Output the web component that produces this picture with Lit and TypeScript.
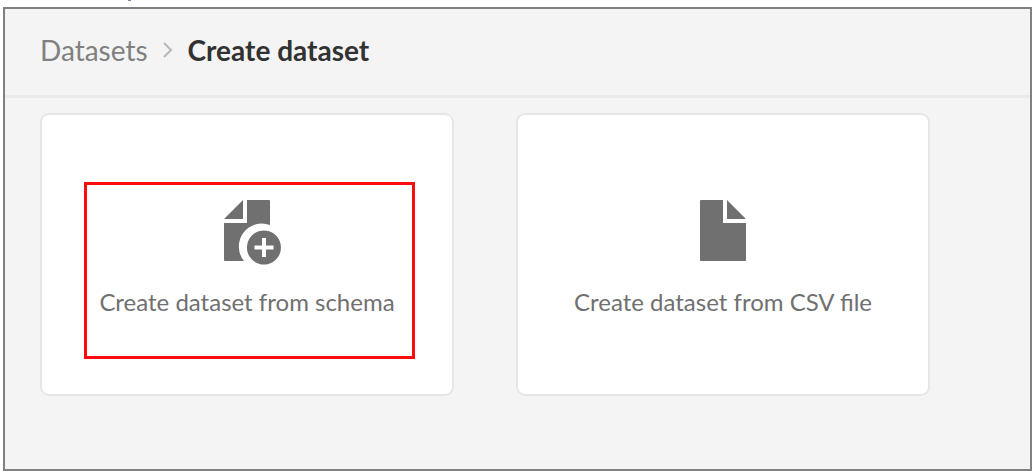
import { LitElement, html, css, svg } from "lit";
import { customElement, property } from "lit/decorators.js";

@customElement("dataset-option")
class DatasetOption extends LitElement {
  @property() label = "";
  @property() icon = "file";
  @property({ type: Boolean }) highlighted = false;

  static styles = css`
    :host {
      display: block;
      flex: 0 1 414px;
      min-width: 0;
    }
    .card {
      position: relative;
      display: flex;
      flex-direction: column;
      align-items: center;
      gap: 21px;
      width: 100%;
      box-sizing: border-box;
      padding: 85px 16px 76px;
      border: 2px solid #e6e6e6;
      border-radius: 9px;
      background: #fff;
      color: #707070;
      font: 24px/32px Lato, "Noto Sans", sans-serif;
      cursor: pointer;
    }
    .icon {
      display: block;
      width: 46px;
      height: 65px;
      overflow: visible;
      fill: #707070;
    }
    .mark {
      position: absolute;
      inset: 67px 37px 35px 42px;
      border: 3px solid #fb0d0d;
      pointer-events: none;
    }
  `;

  private shape() {
    return this.icon === "add"
      ? svg`
          <path d="M19 0V19H0Z" />
          <path d="M23 0H45Q46 0 46 1V25A23 23 0 0 0 20 61H1Q0 61 0 60V23H23Z" />
          <path fill-rule="evenodd" d="M40 30.500A17 17 0 1 1 39.900 30.500ZM38 38V45.500H30.500V49.500H38V57H42V49.500H49.500V45.500H42V38Z" />`
      : svg`
          <path d="M1 0H23V23H46V60Q46 61 45 61H1Q0 61 0 60V1Q0 0 1 0Z" />
          <path d="M27 0L46 19H27Z" />`;
  }

  render() {
    return html`
      <button class="card" type="button">
        <svg class="icon" viewBox="0 0 46 65" aria-hidden="true">${this.shape()}</svg>
        <span>${this.label}</span>
        ${this.highlighted ? html`<span class="mark"></span>` : null}
      </button>
    `;
  }
}

@customElement("app-root")
class AppRoot extends LitElement {
  static styles = css`
    :host {
      display: block;
      background: #fff;
      font-family: Lato, "Noto Sans", sans-serif;
    }
    .above {
      height: 7px;
      padding-left: 128px;
    }
    .tick {
      width: 3px;
      height: 1px;
      background: #8080a0;
    }
    .frame {
      margin: 0 4px 0 3px;
      border: 2px solid #808080;
      background: #f4f4f4;
    }
    .crumbs {
      display: flex;
      align-items: center;
      gap: 15px;
      padding: 25px 35px 29px;
      border-bottom: 3px solid #eaeaea;
      font-size: 28px;
      line-height: 32px;
      color: #808080;
    }
    .parent {
      color: inherit;
      text-decoration: none;
    }
    .arrow {
      width: 10px;
      height: 16px;
      fill: none;
      stroke: #b8b8b8;
      stroke-width: 2;
    }
    .current {
      color: #323232;
      font-weight: 700;
    }
    .options {
      display: flex;
      gap: 62px;
      padding: 15px 35px 73px;
    }
  `;

  render() {
    return html`
      <div class="above"><div class="tick"></div></div>
      <main class="frame">
        <nav class="crumbs" aria-label="Breadcrumb">
          <a class="parent" href="#">Datasets</a>
          <svg class="arrow" viewBox="0 0 10 16" aria-hidden="true"><path d="M1 1L8 8L1 15" /></svg>
          <span class="current" aria-current="page">Create dataset</span>
        </nav>
        <section class="options">
          <dataset-option icon="add" label="Create dataset from schema" highlighted></dataset-option>
          <dataset-option icon="file" label="Create dataset from CSV file"></dataset-option>
        </section>
      </main>
    `;
  }
}
